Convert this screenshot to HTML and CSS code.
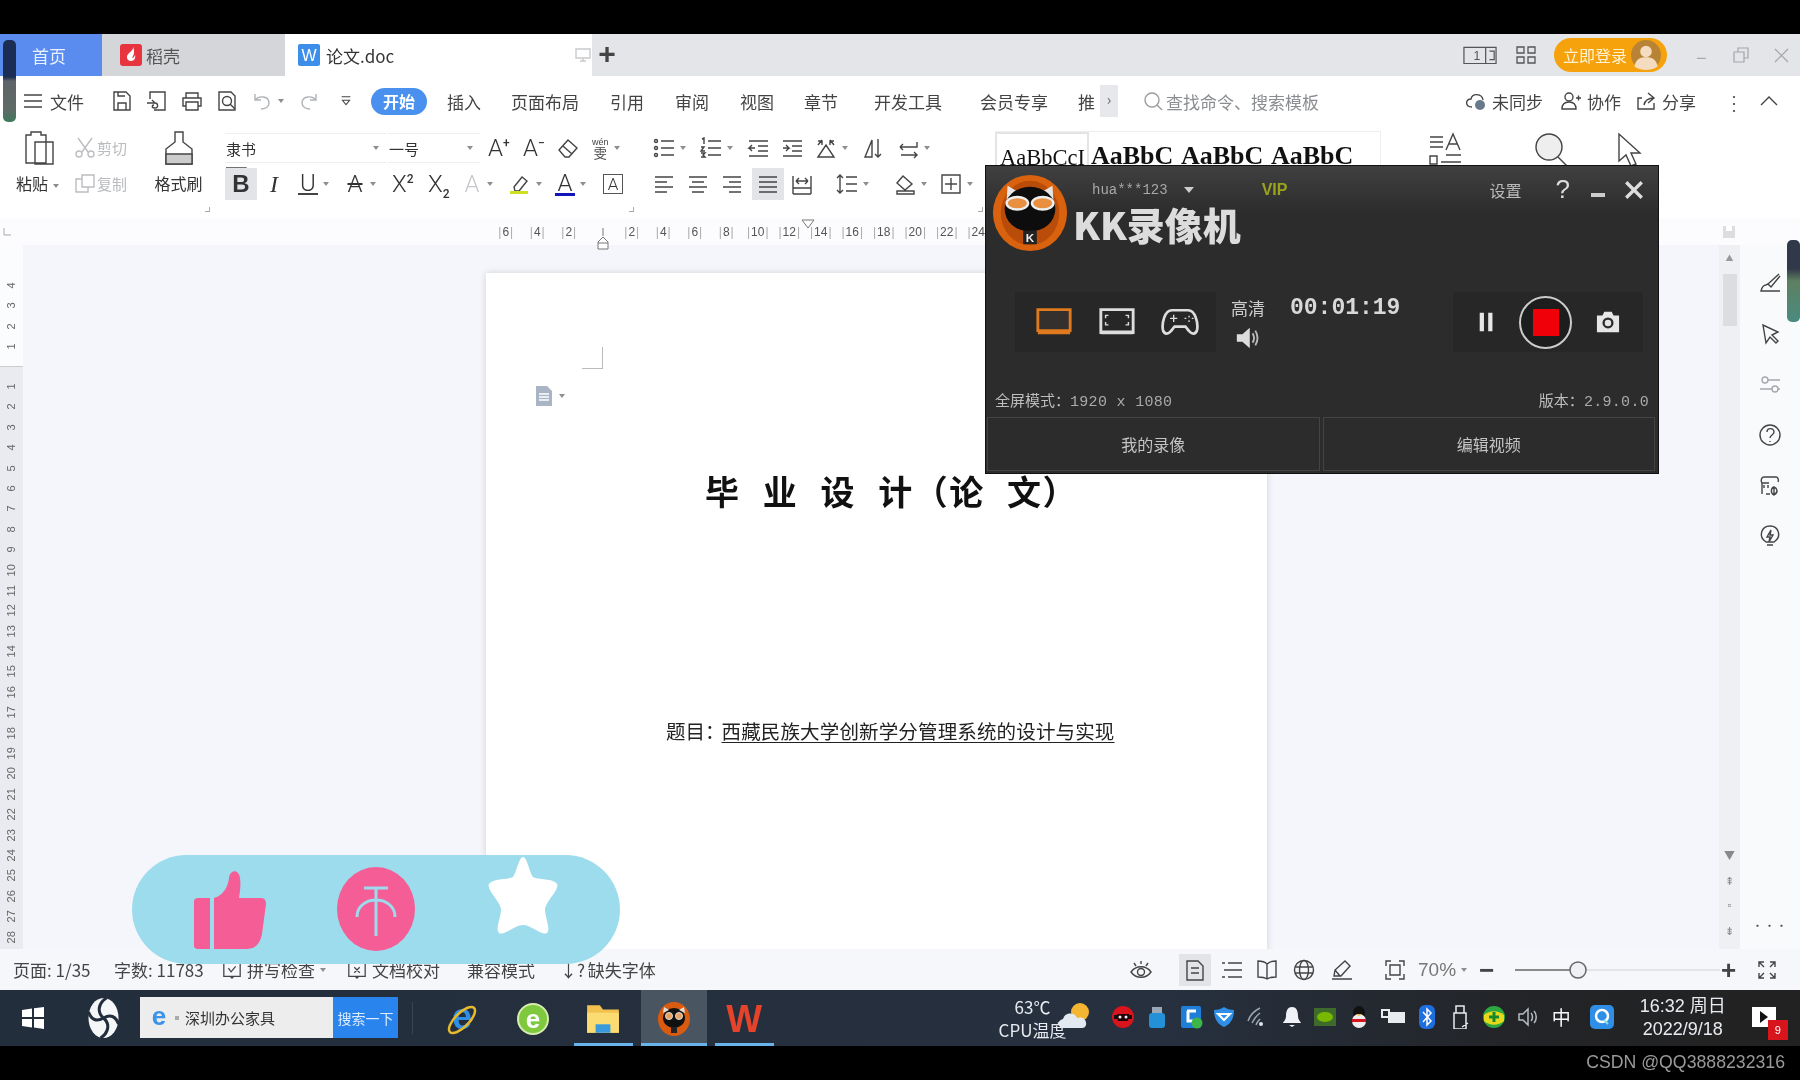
FILE: index.html
```html
<!DOCTYPE html>
<html lang="zh">
<head>
<meta charset="utf-8">
<title>论文.doc</title>
<link rel="stylesheet" href="styles.css">
</head>
<body>
<div class="screen">
  <div class="blackbar"></div>

  <div class="tabbar">
    <div class="tab home">首页</div>
    <div class="tab shell">
      <svg class="tabicon" viewBox="0 0 22 22"><rect width="22" height="22" rx="3" fill="#e8343f"/><path d="M13 3c1 4-7 6-6 11 .4 2 2 3 4 3 3 0 5-3 4-6-.5 2-2 3-3 3 2-3 3-7 1-11z" fill="#fff"/></svg>
      <span>稻壳</span>
    </div>
    <div class="tab doc">
      <svg class="tabicon" viewBox="0 0 22 22"><rect width="22" height="22" rx="2" fill="#3d8ee8"/><text x="11" y="17" text-anchor="middle" class="wlogo">W</text></svg>
      <span>论文.doc</span>
      <svg class="monitor" viewBox="0 0 18 18"><path d="M2 3h14v9H2zM9 12v3M6 15h6"/></svg>
    </div>
    <div class="plus">+</div>
    <div class="tabright">
      <svg class="tr1" viewBox="0 0 36 20"><path d="M1 2h34v17H1zM24 2v17M28 6h5v9h-5"/><text x="11" y="15" class="trnum">1</text></svg>
      <svg class="tr2" viewBox="0 0 22 20"><path d="M2 2h7v6H2zM13 2h7v6h-7zM2 12h7v6H2zM13 12h7v6h-7z"/></svg>
      <div class="login">立即登录
        <svg class="avatar" viewBox="0 0 26 26"><circle cx="13" cy="13" r="13" fill="#b98336"/><circle cx="13" cy="10" r="5" fill="#f3dcc0"/><path d="M3 23c1-7 6-8 10-8s9 1 10 8c-5 4-15 4-20 0z" fill="#f3dcc0"/></svg>
      </div>
      <span class="winbtn min">–</span>
      <svg class="winbtn-i" viewBox="0 0 18 18"><path d="M2 6h10v10H2zM6 6V2h10v10h-4"/></svg>
      <svg class="winbtn-x" viewBox="0 0 18 18"><path d="M3 3l13 13M16 3L3 16"/></svg>
    </div>
  </div>

  <div class="menubar">
    <svg class="ic" viewBox="0 0 22 22"><path d="M2 5h18M2 11h18M2 17h18"/></svg>
    <span>文件</span>
    <svg class="ic" viewBox="0 0 22 22"><path d="M3 2h12l4 4v14H3zM7 20v-7h8v7M7 2v4h7"/></svg>
    <svg class="ic" viewBox="0 0 22 22"><path d="M4 9V2h15v18H8M1 13h8l-3-3M9 13c3 0 4 5 0 5s-3-3-1-3"/></svg>
    <svg class="ic" viewBox="0 0 22 22"><path d="M5 8V3h12v5M5 16H2V8h18v8h-3M5 12h12v8H5z"/></svg>
    <svg class="ic" viewBox="0 0 22 22"><path d="M3 2h12l4 4v14H3z"/><circle cx="11" cy="11" r="4.5"/><path d="M14 14l5 5"/></svg>
    <span class="t"><svg class="ic dim" viewBox="0 0 22 22"><path d="M4 4v6h6M4 10c4-5 14-4 14 3 0 4-4 6-8 6"/></svg><i class="car"></i></span>
    <svg class="ic dim" viewBox="0 0 22 22"><path d="M18 4v6h-6M18 10c-4-5-14-4-14 3 0 4 4 6 8 6"/></svg>
    <svg class="ic small" viewBox="0 0 22 22"><path d="M5 5h12M6 10l5 6 5-6z"/></svg>
    <span class="pill">开始</span>
    <span>插入</span><span>页面布局</span><span>引用</span><span>审阅</span><span>视图</span><span>章节</span><span>开发工具</span><span>会员专享</span>
    <span>推</span><span class="more">›</span>
    <span class="search"><svg class="ic" viewBox="0 0 22 22"><circle cx="10" cy="10" r="7"/><path d="M15 15l5 5"/></svg>查找命令、搜索模板</span>
    <span class="act"><svg class="ic" viewBox="0 0 22 22"><path d="M7 17c-7 0-7-8-1-8 1-6 11-6 12 1"/><circle cx="15" cy="15" r="5" fill="#69798c" stroke="none"/></svg>未同步</span>
    <span class="act"><svg class="ic" viewBox="0 0 22 22"><circle cx="9" cy="7" r="4"/><path d="M2 19c0-5 3-7 7-7s7 2 7 7zM16 8h5M18.5 5.500v5"/></svg>协作</span>
    <span class="act"><svg class="ic" viewBox="0 0 22 22"><path d="M7 8H3v11h16v-6M13 3l6 5-6 5M19 8c-6 0-9 2-10 7"/></svg>分享</span>
    <span class="dots">⋮</span>
    <svg class="ic" viewBox="0 0 22 22"><path d="M3 15l8-8 8 8"/></svg>
  </div>

  <div class="ribbon">
    <div class="clip">
      <div class="paste">
        <svg class="big" viewBox="0 0 34 36"><path d="M5 5h5V2h10v3h5v28H5zM14 12h18v22H14z"/></svg>
        <span class="lbl">粘贴<i class="car"></i></span>
      </div>
      <div class="cutcopy">
        <span class="faded"><svg class="ic" viewBox="0 0 22 22"><path d="M4 2l10 14M18 2L8 16"/><circle cx="5" cy="18" r="3"/><circle cx="17" cy="18" r="3"/></svg>剪切</span>
        <span class="faded"><svg class="ic" viewBox="0 0 22 22"><path d="M8 3h12v12H8zM8 7H2v13h12v-5"/></svg>复制</span>
      </div>
      <div class="paste brush">
        <svg class="big" viewBox="0 0 34 36"><path d="M13 2h8v10l9 7v15H4V19l9-7z"/><path d="M4 24h26v10H4z" fill="#ccc"/></svg>
        <span class="lbl">格式刷</span>
      </div>
    </div>

    <div class="fontgrp">
      <div class="row1">
        <div class="fbox">隶书<i class="car"></i></div>
        <div class="fbox size">一号<i class="car"></i></div>
        <span class="gl">A<sup>+</sup></span>
        <span class="gl">A<sup>−</sup></span>
        <svg class="ic" viewBox="0 0 22 22"><path d="M2 13l9-10 9 8-8 9H8zM6 9l9 8"/></svg>
        <span class="t"><span class="wen"><small>wén</small>雯</span><i class="car"></i></span>
        <span class="t"><svg class="ic" viewBox="0 0 22 22"><path d="M8 4h13M8 11h13M8 18h13"/><circle cx="3" cy="4" r="1.500"/><circle cx="3" cy="11" r="1.500"/><circle cx="3" cy="18" r="1.500"/></svg><i class="car"></i></span>
        <span class="t"><svg class="ic" viewBox="0 0 22 22"><path d="M8 4h13M8 11h13M8 18h13M2 2l2-1v6M1 10h3l-3 4h4M1 16h4l-2 2 2 2H1"/></svg><i class="car"></i></span>
        <svg class="ic" viewBox="0 0 22 22"><path d="M2 4h19M11 9h10M11 14h10M2 19h19M8 11H2l3-3M2 11l3 3"/></svg>
        <svg class="ic" viewBox="0 0 22 22"><path d="M2 4h19M11 9h10M11 14h10M2 19h19M2 11h6l-3-3M8 11l-3 3"/></svg>
        <span class="t"><svg class="ic" viewBox="0 0 22 22"><path d="M3 20L11 8l8 12zM3 8l4-5M3 4h4v4M19 8l-4-5M19 4h-4v4"/></svg><i class="car"></i></span>
        <svg class="ic" viewBox="0 0 22 22"><path d="M2 20L9 3v17zM2 20h7M15 2v18M12 17l3 3 3-3"/></svg>
        <span class="t"><svg class="ic" viewBox="0 0 22 22"><path d="M20 5v5H3M3 10l3-3M3 10l3 3M4 18h16M17 15l3 3-3 3"/></svg><i class="car"></i></span>
        <svg class="ic" viewBox="0 0 22 22"><path d="M1 5h20v5M1 5v5M5 5v3M9 5v3M13 5v3M17 5v3M1 14v4h6M21 14v4h-6M11 13v5"/></svg>
      </div>
      <div class="row2">
        <span class="gl bold on">B</span>
        <span class="gl ital">I</span>
        <span class="t"><span class="gl under">U</span><i class="car"></i></span>
        <span class="t"><span class="gl strike">A</span><i class="car"></i></span>
        <span class="gl">X<sup>2</sup></span>
        <span class="gl">X<sub>2</sub></span>
        <span class="t"><span class="gl pale">A</span><i class="car"></i></span>
        <span class="t"><svg class="ic" viewBox="0 0 22 22"><path d="M5 14l8-10 5 4-8 10H6z"/><path d="M1 18h18v3H1z" fill="#cfe01e" stroke="none"/></svg><i class="car"></i></span>
        <span class="t"><span class="gl colored">A</span><i class="car"></i></span>
        <span class="gl boxed">A</span>
        <svg class="ic" viewBox="0 0 22 22"><path d="M2 4h18M2 9h12M2 14h18M2 19h12"/></svg>
        <svg class="ic" viewBox="0 0 22 22"><path d="M2 4h18M5 9h12M2 14h18M5 19h12"/></svg>
        <svg class="ic" viewBox="0 0 22 22"><path d="M2 4h18M8 9h12M2 14h18M8 19h12"/></svg>
        <svg class="ic on" viewBox="0 0 22 22"><path d="M2 4h18M2 9h18M2 14h18M2 19h18"/></svg>
        <svg class="ic" viewBox="0 0 22 22"><path d="M2 3v18M20 3v18M2 21h18M2 15h18M5 8h12M5 8l3-3M5 8l3 3M17 8l-3-3M17 8l-3 3"/></svg>
        <span class="t"><svg class="ic" viewBox="0 0 22 22"><path d="M4 2v18M1 5l3-3 3 3M1 17l3 3 3-3M10 4h11M10 11h11M10 18h11"/></svg><i class="car"></i></span>
        <span class="t"><svg class="ic" viewBox="0 0 22 22"><path d="M9 3l9 8-7 6-8-7zM3 18h17v3H3z"/></svg><i class="car"></i></span>
        <span class="t"><svg class="ic" viewBox="0 0 22 22"><path d="M2 2h18v18H2zM11 5v12M5 11h12" /></svg><i class="car"></i></span>
      </div>
    </div>

    <div class="gallery">
      <span class="sel">AaBbCcI</span><span>AaBbC</span><span>AaBbC</span><span>AaBbC</span>
    </div>
    <div class="bigtools">
      <svg class="big" viewBox="0 0 36 36"><path d="M3 5h13M3 10h13M3 15h13M19 18l7-16 7 16M22 12h8M19 23h15M3 24h7v8H3zM14 30h20"/></svg>
      <svg class="big" viewBox="0 0 36 36"><circle cx="16" cy="15" r="13" fill="#eee"/><path d="M25 25l9 9"/></svg>
      <svg class="big" viewBox="0 0 36 36"><path d="M8 2v27l7-6 5 11 5-2-5-11h9z"/></svg>
    </div>
    <i class="launch l1"></i><i class="launch l2"></i><i class="launch l3"></i>
  </div>

  <div class="ruler">
    <svg class="corner" viewBox="0 0 10 10"><path d="M1 1v7h7"/></svg>
    <div class="rnums">
      <span>6</span><span>4</span><span>2</span><span class="blank"></span><span>2</span><span>4</span><span>6</span><span>8</span><span>10</span><span>12</span><span>14</span><span>16</span><span>18</span><span>20</span><span>22</span><span>24</span>
    </div>
    <svg class="rbtn" viewBox="0 0 14 14"><path d="M1 1h12v12H1z" fill="#ddd"/><path d="M4 1h6v5H4z" fill="#fff"/></svg>
    <svg class="indent" viewBox="0 0 14 22"><path d="M7 0v8M2 14l5-5 5 5v7H2zM2 15h10"/></svg>
    <svg class="tabmark" viewBox="0 0 14 10"><path d="M1 1h12L7 9z"/></svg>
  </div>

  <div class="work">
    <div class="vruler">
      <div class="vtop"><span>4</span><span>3</span><span>2</span><span>1</span></div>
      <div class="vmain">
        <span>1</span><span>2</span><span>3</span><span>4</span><span>5</span><span>6</span><span>7</span><span>8</span><span>9</span><span>10</span><span>11</span><span>12</span><span>13</span><span>14</span><span>15</span><span>16</span><span>17</span><span>18</span><span>19</span><span>20</span><span>21</span><span>22</span><span>23</span><span>24</span><span>25</span><span>26</span><span>27</span><span>28</span>
      </div>
    </div>
    <div class="docarea">
      <div class="page">
        <div class="cropmark"></div>
        <div class="docicon">
          <svg viewBox="0 0 20 22"><path d="M2 1h11l5 5v15H2z" fill="#a9b4c4"/><path d="M5 9h10M5 12h10M5 15h10" stroke="#fff" stroke-width="1.500"/></svg><i class="car"></i>
        </div>
        <h1 class="title">毕 业 设 计（论 文）</h1>
        <p class="subject">题目：<u>西藏民族大学创新学分管理系统的设计与实现</u></p>
      </div>
    </div>
    <div class="scroll">
      <span class="sarrow">▲</span>
      <div class="thumb"></div>
      <div class="sbtm"><span>▼</span><span>⇞</span><span>▫</span><span>⇟</span></div>
    </div>
    <div class="side">
      <svg class="ic" viewBox="0 0 22 22"><path d="M20 2L9 12l-2 1c-2 0-4 2-5 6h19M9 12l3 3 9-11"/></svg>
      <svg class="ic" viewBox="0 0 22 22"><path d="M4 2l3 18 4-6 6 6 2-2-6-6 6-3z"/></svg>
      <svg class="ic light" viewBox="0 0 22 22"><circle cx="6" cy="7" r="3"/><circle cx="16" cy="16" r="3"/><path d="M9 7h12M1 16h12M19 16h2"/></svg>
      <svg class="ic" viewBox="0 0 22 22"><circle cx="11" cy="11" r="10"/><path d="M8 8c0-5 7-4 7 0 0 3-4 3-4 6M11 17v1"/></svg>
      <svg class="ic" viewBox="0 0 22 22"><path d="M3 20V9c-2-3 0-6 2-6h12c2 0 3 3 2 5M3 9h7M7 20h4M5 11v3M9 11v3"/><path d="M15 21c-4-2-3-7 0-8 3 1 5 5 0 8zM15 13v8"/></svg>
      <svg class="ic" viewBox="0 0 22 22"><path d="M8 20h6M7 17c-8-5-5-16 4-16s12 11 4 16zM12 5l-4 7h3l-1 5 4-7h-3z"/></svg>
      <span class="ellipsis">•••</span>
    </div>
  </div>

  <div class="status">
    <div class="sleft">
      <span>页面: 1/35</span>
      <span>字数: 11783</span>
      <span class="t"><svg class="ic" viewBox="0 0 22 22"><path d="M2 3h18v15H2zM7 9l3 4 5-6M9 18l2 2 2-2"/></svg>拼写检查<i class="car"></i></span>
      <span class="t"><svg class="ic" viewBox="0 0 22 22"><path d="M2 3h18v15H2zM8 8l6 6M14 8l-6 6M9 18l2 2 2-2"/></svg>文档校对</span>
      <span>兼容模式</span>
      <span class="missing">↓? 缺失字体</span>
    </div>
    <div class="sright">
      <svg class="ic" viewBox="0 0 22 22"><path d="M1 13c5-7 15-7 20 0-5 7-15 7-20 0zM11 2v3M4 4l2 3M18 4l-2 3"/><circle cx="11" cy="13" r="3.500"/></svg>
      <svg class="ic on" viewBox="0 0 22 22"><path d="M3 2h11l5 5v14H3zM7 9h8M7 14h8"/></svg>
      <svg class="ic" viewBox="0 0 22 22"><path d="M7 4h14M3 11h18M7 18h14M1 4h3M1 18h3"/></svg>
      <svg class="ic" viewBox="0 0 22 22"><path d="M11 5c-3-3-6-3-9-3v16c3 0 6 0 9 2 3-2 6-2 9-2V2c-3 0-6 0-9 3zM11 5v15"/></svg>
      <svg class="ic" viewBox="0 0 22 22"><circle cx="11" cy="11" r="9.500"/><ellipse cx="11" cy="11" rx="4.500" ry="9.500"/><path d="M2 8h18M2 14h18"/></svg>
      <svg class="ic" viewBox="0 0 22 22"><path d="M2 20h20M4 17l1-6L15 2l5 5-9 10zM5 11l5 6"/></svg>
      <svg class="ic" viewBox="0 0 22 22"><path d="M7 2H2v5M15 2h5v5M2 15v5h5M20 15v5h-5M6 6h10v10H6z"/></svg>
      <span class="zoomval">70%<i class="car"></i></span>
      <span class="minus">−</span>
      <svg class="slider" viewBox="0 0 207 20"><path class="sl-on" d="M1 10h55"/><path class="sl-off" d="M72 10h134"/><circle class="sl-k" cx="64" cy="10" r="8"/></svg>
      <span class="plusz">+</span>
      <svg class="ic" viewBox="0 0 22 22"><path d="M3 8V3h5M3 3l5 5M19 8V3h-5M19 3l-5 5M3 14v5h5M3 19l5-5M19 14v5h-5M19 19l-5-5"/></svg>
    </div>
  </div>

  <div class="taskbar">
    <div class="tcell win">
      <svg viewBox="0 0 24 24"><path d="M1 4l10-1.500V11H1zM13 2.200L23 1v10H13zM1 13h10v8.500L1 20zM13 13h10v10l-10-1.500z" fill="#fff"/></svg>
    </div>
    <div class="tcell swirl">
      <svg viewBox="0 0 30 40"><ellipse cx="15" cy="20" rx="15" ry="20" fill="#f4f6f8"/><path d="M15 20C8 14 10 5 18 0M15 20c7 6 5 15-3 20M15 20C8 24 3 22 0 14M15 20c7-4 12-2 15 6" fill="none" stroke="#232e3d" stroke-width="3"/></svg>
    </div>
    <div class="tsearch">
      <div class="tinput">
        <svg class="vis" viewBox="0 0 26 26"><text x="13" y="20" text-anchor="middle" class="ietxt">e</text></svg>
        <i class="tdot"></i>深圳办公家具
      </div>
      <div class="tgo">搜索一下</div>
    </div>
    <div class="tsep"></div>
    <div class="tapp">
      <svg class="vis" viewBox="0 0 36 36"><text x="18" y="28" text-anchor="middle" class="ie2">e</text><ellipse cx="18" cy="19" rx="17" ry="7" transform="rotate(-45 18 19)" class="iering"/></svg>
    </div>
    <div class="tapp">
      <svg class="vis" viewBox="0 0 36 36"><circle cx="18" cy="18" r="15" fill="#7ec93e"/><circle cx="18" cy="18" r="15" fill="none" stroke="#d7ecb0" stroke-width="2"/><text x="18" y="27" text-anchor="middle" class="ie3">e</text></svg>
    </div>
    <div class="tapp open">
      <svg viewBox="0 0 34 34"><path d="M2 4h12l3 4h15v22H2z" fill="#f2c14e"/><path d="M2 11h30v19H2z" fill="#fbdc72"/><path d="M10 30v-8h14v8z" fill="#3a9bdc"/></svg>
    </div>
    <div class="tapp open active">
      <svg viewBox="0 0 36 36"><ellipse cx="18" cy="18" rx="16" ry="17" fill="#d85b10"/><ellipse cx="18" cy="17" rx="11" ry="10" fill="#111"/><path d="M7 12l1-6 5 3zM29 12l-1-6-5 3z" fill="#ddd"/><circle cx="13" cy="15" r="3.500" fill="#e8a060" stroke="#ddd"/><circle cx="23" cy="15" r="3.500" fill="#e8a060" stroke="#ddd"/><rect x="15" y="26" width="6" height="6" fill="#222"/></svg>
    </div>
    <div class="tapp open"><span class="wps">W</span></div>
    <div class="temp">
      <div class="temptxt">63℃<br>CPU温度</div>
      <svg class="cloud" viewBox="0 0 34 28"><circle cx="22" cy="10" r="9" fill="#f4b632"/><path d="M6 26c-7 0-7-8-1-9 2-7 12-7 14-1 6-2 10 2 9 7-1 3-3 3-5 3z" fill="#e3e9f0"/></svg>
    </div>
    <div class="tray">
      <span><svg viewBox="0 0 24 24"><circle cx="12" cy="12" r="11" fill="#d8141c"/><path d="M3 10h18v4H3z" fill="#111"/><path d="M6 9h12l-1 7H7z" fill="#200"/><circle cx="9" cy="12" r="1.500" fill="#eee"/><circle cx="15" cy="12" r="1.500" fill="#eee"/></svg></span>
      <span><svg viewBox="0 0 24 24"><rect x="7" y="2" width="10" height="7" fill="#9aa7b4"/><rect x="4" y="8" width="16" height="15" rx="3" fill="#2390d8"/></svg></span>
      <span><svg viewBox="0 0 24 24"><rect x="2" y="1" width="20" height="22" rx="2" fill="#1e7ed8"/><path d="M8 6h9M9 6v10h5" stroke="#fff" stroke-width="3" fill="none"/><circle cx="18" cy="18" r="5.500" fill="#3cb648"/></svg></span>
      <span><svg viewBox="0 0 24 24"><path d="M12 2c3 2 6 3 10 3 0 8-3 14-10 17C5 19 2 13 2 5c4 0 7-1 10-3z" fill="#2f8fe6"/><path d="M6 9h12l-6 6z" fill="none" stroke="#fff" stroke-width="2"/></svg></span>
      <span><svg viewBox="0 0 24 24"><path d="M2 16C4 10 8 6 14 3M6 18c2-4 4-7 8-10M10 20c1-3 2-4 4-6" stroke="#9ba6b2" stroke-width="1.500" fill="none"/><circle cx="15" cy="19" r="2" fill="#dfe5ea"/></svg></span>
      <span><svg viewBox="0 0 24 24"><path d="M12 2c5 0 6 5 6 9s3 6 3 7H3c0-1 3-3 3-7s1-9 6-9zM9 20h6l-3 2z" fill="#eef2f6"/></svg></span>
      <span><svg viewBox="0 0 24 24"><rect x="1" y="3" width="22" height="18" fill="#3e6b2c"/><ellipse cx="12" cy="12" rx="8" ry="5" fill="#76b900"/></svg></span>
      <span><svg viewBox="0 0 24 24"><ellipse cx="12" cy="8" rx="6" ry="7" fill="#111"/><ellipse cx="12" cy="16" rx="7" ry="7" fill="#eee"/><path d="M5 14h14v3H5z" fill="#d8141c"/><path d="M9 9h6l-3 2z" fill="#f4b632"/></svg></span>
      <span><svg viewBox="0 0 24 24"><rect x="7" y="7" width="17" height="11" fill="#e8ecef"/><path d="M1 5h7v7H1z" fill="none" stroke="#e8ecef" stroke-width="2"/></svg></span>
      <span><svg viewBox="0 0 24 24"><rect x="4" y="0" width="16" height="24" rx="6" fill="#1d6fe0"/><path d="M8 7l8 9-4 4V4l4 4-8 9" fill="none" stroke="#fff" stroke-width="1.500"/></svg></span>
      <span><svg viewBox="0 0 24 24"><path d="M6 8h12v16H6zM8 1h8v7H8zM14 22l6-4" fill="none" stroke="#e8ecef" stroke-width="1.500"/></svg></span>
      <span><svg viewBox="0 0 24 24"><circle cx="12" cy="12" r="11" fill="#2ea843"/><path d="M2 10c6-5 14-5 20 0v6c-6 5-14 5-20 0z" fill="#e6d91c"/><path d="M12 7v10M7 12h10" stroke="#158a2d" stroke-width="3"/></svg></span>
      <span><svg viewBox="0 0 24 24"><path d="M3 9h4l5-5v16l-5-5H3zM15 8c2 2 2 6 0 8M18 6c3 3 3 9 0 12" fill="none" stroke="#b4bcc4" stroke-width="1.500"/></svg></span>
      <span class="ime">中</span>
      <span class="qq"><svg viewBox="0 0 24 24"><rect width="24" height="24" rx="5" fill="#2f8fe6"/><circle cx="12" cy="11" r="6" fill="none" stroke="#fff" stroke-width="2.500"/><path d="M14 15l4 4" stroke="#8ee0e8" stroke-width="2"/></svg></span>
    </div>
    <div class="clock">16:32 周日<br>2022/9/18</div>
    <div class="notify">
      <svg viewBox="0 0 24 20"><rect width="24" height="20" fill="#fff"/><path d="M8 4l8 6-8 6z" fill="#111"/></svg>
      <span class="badge">9</span>
    </div>
  </div>

  <div class="footer">CSDN @QQ3888232316</div>

  <div class="meter meter-l"></div>
  <div class="meter meter-r"></div>

  <div class="kk">
    <svg class="kklogo" viewBox="0 0 80 80">
      <ellipse cx="40" cy="40" rx="38" ry="39" fill="#d9620f"/>
      <ellipse cx="40" cy="40" rx="30" ry="33" fill="#b84c08"/>
      <path d="M16 26l1-14 12 7zM64 26l-1-14-12 7z" fill="#e6e6e6"/>
      <ellipse cx="40" cy="36" rx="26" ry="23" fill="#0d0d0d"/>
      <ellipse cx="27" cy="30" rx="11" ry="6.500" fill="#e89040" stroke="#eee" stroke-width="2.500"/>
      <ellipse cx="53" cy="30" rx="11" ry="6.500" fill="#e89040" stroke="#eee" stroke-width="2.500"/>
      <rect x="33" y="58" width="14" height="14" fill="#222"/>
      <text x="40" y="70" text-anchor="middle" class="kkk">K</text>
    </svg>
    <div class="kktop">
      <span class="kkuser">hua***123</span><i class="kkcar"></i>
      <span class="kkvip">VIP</span>
      <span class="kkset">设置</span>
      <span class="kkq">?</span>
      <span class="kkmin"></span>
      <svg class="kkx" viewBox="0 0 18 18"><path d="M2 2l14 14M16 2L2 16"/></svg>
    </div>
    <div class="kktitle">KK录像机</div>
    <div class="kkctl">
      <div class="kkmodes">
        <svg viewBox="0 0 40 34"><path d="M3 4h34v22H3z" class="kko"/><path d="M3 26h34v4H3z" fill="#e07a1f"/></svg>
        <svg viewBox="0 0 40 34"><path d="M3 4h34v24H3z" class="kkw"/><path d="M3 26h34v4H3z" fill="#ddd"/><path d="M11 10H8v3M29 10h3v3M11 20H8v-3M29 20h3v-3" class="kkw2"/></svg>
        <svg viewBox="0 0 42 34"><path d="M12 4h18c8 0 11 14 10 21-1 6-6 6-9 2l-4-5H15l-4 5c-3 4-8 4-9-2C1 18 4 4 12 4z" class="kkw"/><path d="M10 13h8M14 9v8M26 13h2M31 10v2M31 15v2M34 13h2" class="kkw2"/></svg>
      </div>
      <div class="kkmid">
        <div class="kkline"><span class="kkhd">高清</span><span class="kktime">00:01:19</span></div>
        <svg class="kkvol" viewBox="0 0 26 26"><path d="M2 9h6l8-7v22l-8-7H2z" fill="#ddd"/><path d="M19 8c2 3 2 7 0 10M22 5c3 5 3 11 0 16" fill="none" stroke="#bbb" stroke-width="2"/></svg>
      </div>
      <div class="kkrec">
        <svg class="kkpause" viewBox="0 0 20 24"><path d="M2 1h5v22H2zM12 1h5v22h-5z" fill="#e6e6e6"/></svg>
        <div class="kkbtn"><i></i></div>
        <svg class="kkcam" viewBox="0 0 28 26"><path d="M2 6h6l2-4h8l2 4h6v18H2z" fill="#e6e6e6"/><circle cx="14" cy="14" r="6" fill="#2b2b2b"/><circle cx="14" cy="14" r="3.500" fill="#e6e6e6"/></svg>
      </div>
    </div>
    <div class="kkinfo"><span>全屏模式：<b>1920 x 1080</b></span><span>版本：<b>2.9.0.0</b></span></div>
    <div class="kkbtns"><div>我的录像</div><div>编辑视频</div></div>
  </div>

  <div class="sticker">
    <svg class="thumbup" viewBox="0 0 72 78"><path d="M0 30c0-2 2-3 4-3h12v51H4c-2 0-4-1-4-3zM20 27c8-2 14-10 15-20 1-9 10-9 11 0 1 7 0 13-1 20h22c4 0 5 3 5 6l-4 30c-2 10-7 15-15 15H20z" fill="#f45d96"/></svg>
    <div class="coin">
      <svg viewBox="0 0 52 56"><path d="M14 7h24M26 7v48M7 36c0-10 8-17 19-17s19 7 19 17" fill="none" stroke="#9ddcec" stroke-width="3"/></svg>
    </div>
    <svg class="star" viewBox="0 0 72 78"><path d="M36 0c4 0 6 14 10 20 5 3 20 1 24 7 3 5-11 17-12 25 0 9 6 20 2 24-5 3-16-8-24-8-8 0-19 11-24 8-4-4 2-15 2-24C13 44-1 32 2 27c4-6 19-4 24-7C30 14 32 0 36 0z" fill="#fff"/></svg>
  </div>
</div>
</body>
</html>
```

FILE: styles.css
```css
* { box-sizing: border-box; }
html, body { margin: 0; padding: 0; background: #000; }
body { font-family: "Noto Sans CJK SC", "Noto Sans", sans-serif; color: #444; }
i { font-style: normal; }

.screen {
  position: relative;
  width: 1800px;
  height: 1080px;
  overflow: hidden;
  background: #000;
  display: flex;
  flex-direction: column;
  filter: blur(0.5px);
}
.blackbar { height: 34px; flex: none; background: #000; }

svg { flex: none; display: block; }
svg.vis { overflow: visible; }
.ic { width: 22px; height: 22px; fill: none; stroke: #444; stroke-width: 1.4; }
.ic.dim { stroke: #b0b3b8; }
.ic.small { width: 16px; height: 16px; margin-left: 3px; }
.ic.light { stroke: #a5a8ad; }
.big { width: 36px; height: 36px; fill: none; stroke: #444; stroke-width: 1.4; }
.car { display: inline-block; width: 0; height: 0; margin-left: 5px; border: 3px solid transparent; border-top: 4px solid #8b8e93; border-bottom: 0; vertical-align: middle; }
.t { display: inline-flex; align-items: center; white-space: nowrap; }
.on { background: #e2e4e8; box-shadow: 0 0 0 5px #e2e4e8; }

/* tab strip */
.tabbar { height: 42px; flex: none; display: flex; align-items: stretch; background: #e3e5e8; font-size: 17px; }
.tab { display: flex; align-items: center; }
.home { width: 102px; padding-left: 32px; background: #5a8cf0; color: #e9f0ff; }
.shell { width: 183px; padding-left: 18px; background: #d5d6d9; color: #555; gap: 4px; }
.doc { width: 307px; padding-left: 13px; background: #fff; color: #333; gap: 6px; position: relative; }
.tabicon { width: 22px; height: 22px; }
.wlogo { font: 16px "Liberation Sans", sans-serif; fill: #fff; }
.monitor { width: 18px; height: 18px; margin-left: auto; margin-right: 0; fill: none; stroke: #c8cacd; stroke-width: 1.4; }
.plus { width: 30px; text-align: center; font: 700 30px/40px "Liberation Sans", sans-serif; color: #444; }
.tabright { margin-left: auto; display: flex; align-items: center; }
.tr1 { width: 34px; height: 20px; margin-right: 18px; fill: none; stroke: #555; stroke-width: 1.3; }
.trnum { font: 13px "Liberation Sans", sans-serif; fill: #555; stroke: none; }
.tr2 { width: 22px; height: 20px; margin-right: 17px; fill: none; stroke: #555; stroke-width: 1.3; }
.login { width: 113px; height: 34px; border-radius: 17px; background: #f5a20c; color: #fff3d6; display: flex; align-items: center; padding-left: 9px; gap: 3px; font-size: 16px; white-space: nowrap; }
.avatar { width: 30px; height: 30px; margin-left: 1px; }
.winbtn { width: 16px; margin-left: 29px; color: #aaa; font-size: 20px; }
.winbtn-i, .winbtn-x { width: 18px; height: 18px; fill: none; stroke: #a2a5a9; stroke-width: 1.2; }
.winbtn-i { margin-left: 20px; }
.winbtn-x { margin: 0 10px 0 22px; }

/* menu */
.menubar {
  height: 52px; flex: none; background: #fff; padding-left: 22px; padding-bottom: 2px;
  display: grid; align-items: center; white-space: nowrap; font-size: 17px; color: #444;
  grid-template-columns: 28px 61px 35px 35px 35px 35px 47px 37px 36px 76px 64px 99px 65px 65px 64px 70px 106px 98px 22px 42px 323px 95px 75px 87px 36px 22px;
}
.pill { width: 56px; height: 27px; border-radius: 14px; background: #4a90ee; color: #fff; font-weight: 700; font-size: 16px; line-height: 26px; text-align: center; }
.more { width: 18px; height: 32px; background: #e7e8eb; text-align: center; line-height: 28px; color: #666; font-size: 15px; }
.search { display: flex; align-items: center; gap: 2px; color: #8a8d91; }
.search .ic { stroke: #9a9da1; }
.act { display: flex; align-items: center; gap: 5px; }
.dots { font-size: 20px; color: #666; padding-left: 2px; }

/* ribbon */
.ribbon { position: relative; height: 90px; flex: none; background: #fff; display: flex; padding-top: 2px; }
.clip { width: 225px; flex: none; display: flex; }
.paste { width: 72px; display: flex; flex-direction: column; align-items: center; padding-left: 3px; gap: 2px; }
.lbl { font-size: 16px; color: #333; white-space: nowrap; height: 30px; line-height: 30px; }
.cutcopy { width: 70px; display: flex; flex-direction: column; gap: 14px; padding-top: 6px; padding-left: 2px; }
.faded { display: flex; align-items: center; gap: 1px; color: #b9bbbe; font-size: 15px; white-space: nowrap; height: 22px; }
.faded .ic { stroke: #bbbdc0; }
.brush { width: 70px; }
.fontgrp { width: 770px; flex: none; display: flex; flex-direction: column; }
.row1, .row2 { display: grid; height: 36px; align-items: center; white-space: nowrap; }
.row1 { grid-template-columns: 161px 102px 35px 34px 35px 61px 47px 47px 34px 34px 48px 34px 47px; padding-top: 3px; }
.row2 { grid-template-columns: 39px 34px 47px 47px 36px 34px 47px 46px 48px 50px 34px 34px 36px 34px 45px 58px 46px 34px; }
.fbox { height: 30px; display: flex; align-items: center; padding-left: 1px; border-top: 1px solid #eee; border-bottom: 1px solid #eee; font-size: 15px; color: #333; }
.fbox .car { margin-left: auto; margin-right: 7px; }
.fbox.size { width: 92px; margin-left: 2px; }
.gl { font: 300 24px/22px Roboto, sans-serif; color: #333; display: inline-block; width: 26px; white-space: nowrap; }
.gl sup, .gl sub { font-size: 12px; font-weight: 500; line-height: 0; }
.gl.bold { font-weight: 700; text-align: center; width: 32px; height: 32px; line-height: 32px; box-shadow: none; font-family: "Liberation Sans", sans-serif; }
.row2 .gl.on { background: #e2e4e8; }
.gl.ital { font-family: "Liberation Serif", serif; font-style: italic; padding-left: 6px; }
.gl.under { width: 20px; border-bottom: 2px solid #444; line-height: 20px; text-align: center; }
.gl.strike { width: 20px; text-align: center; text-decoration: line-through; }
.gl.pale { width: 20px; color: #c5c7ca; text-align: center; }
.gl.colored { width: 20px; text-align: center; border-bottom: 3px solid #1216b8; line-height: 20px; }
.gl.boxed { width: 20px; height: 20px; font-size: 17px; line-height: 18px; text-align: center; border: 1.5px solid #555; }
.wen { display: inline-flex; flex-direction: column; align-items: center; font-size: 13px; line-height: 12px; color: #444; }
.wen small { font-size: 9px; line-height: 9px; font-family: "Liberation Sans", sans-serif; }

.gallery {
  width: 386px; height: 70px; flex: none; margin-top: 1px; border-top: 1px solid #eee; border-right: 1px solid #eee;
  display: flex; font: 700 26px/48px "Liberation Serif", serif; color: #111; overflow: hidden; white-space: nowrap;
}
.gallery span { width: 90px; overflow: hidden; flex: none; padding-left: 2px; }
.gallery .sel { font-weight: 400; font-size: 22.5px; border: 2px solid #e4e4e4; border-bottom: 0; width: 94px; padding-left: 3px; }
.bigtools { display: grid; grid-template-columns: 106px 78px 40px; padding-left: 46px; padding-top: 2px; }
.launch { position: absolute; top: 79px; width: 5px; height: 5px; border-right: 1px solid #aaa; border-bottom: 1px solid #aaa; }
.l1 { left: 205px; } .l2 { left: 629px; } .l3 { left: 978px; }

/* ruler */
.ruler { position: relative; height: 27px; flex: none; background: #fcfcfe; display: flex; align-items: center; font: 12px/14px "Liberation Sans", sans-serif; color: #555; }
.corner { position: absolute; left: 3px; top: 9px; width: 10px; height: 10px; fill: none; stroke: #aaa; stroke-width: 1; }
.rnums { margin-left: 490px; display: flex; }
.rnums span { width: 31.5px; text-align: center; position: relative; white-space: nowrap; }
.rnums span:not(.blank)::before { content: "|"; color: #aaa; margin-right: 1px; }
.rnums span:not(.blank)::after { content: "|"; color: #aaa; margin-left: 1px; }
.rbtn { width: 14px; height: 14px; margin-left: auto; margin-right: 64px; }
.indent { position: absolute; left: 596px; top: 10px; width: 14px; height: 22px; fill: #fff; stroke: #777; stroke-width: 1; }
.tabmark { position: absolute; left: 801px; top: 1px; width: 14px; height: 10px; fill: #fff; stroke: #777; stroke-width: 1; }

/* workspace */
.work { height: 704px; flex: none; display: flex; overflow: hidden; background: #f4f6fb; }
.vruler { width: 23px; flex: none; display: flex; flex-direction: column; font: 11px/20.4px "Liberation Sans", sans-serif; color: #666; text-align: center; }
.vruler span { display: block; height: 20.4px; writing-mode: vertical-rl; transform: rotate(180deg); width: 23px; text-align: center; line-height: 23px; }
.vtop { height: 122px; flex: none; padding-top: 30px; background: #fbfcfe; border-bottom: 1px solid #ccc; }
.vmain { flex: 1; padding-top: 9px; background: #e9ebf1; }
.docarea { flex: 1; min-width: 0; }
.page { margin: 28px 0 0 463px; width: 781px; height: 700px; background: #fff; box-shadow: 0 0 7px rgba(0, 0, 0, .14); overflow: hidden; }
.cropmark { width: 21px; height: 22px; margin: 74px 0 0 96px; border-right: 1px solid #bbb; border-bottom: 1px solid #bbb; }
.docicon { margin: 16px 0 0 48px; display: flex; align-items: center; height: 22px; }
.docicon svg { width: 20px; height: 22px; }
.title { margin: 62px 0 0; padding-left: 30px; height: 44px; text-align: center; font-size: 34px; line-height: 44px; font-weight: 700; color: #111; word-spacing: 13px; letter-spacing: 1.5px; white-space: nowrap; }
.subject { margin: 204px 0 0 180px; font-size: 19.5px; line-height: 28px; color: #222; white-space: nowrap; }
.subject u { text-underline-offset: 3px; margin-left: -3px; letter-spacing: .15px; }
.scroll { width: 21px; flex: none; background: #eff0f4; display: flex; flex-direction: column; align-items: center; padding-top: 6px; }
.sarrow { font-size: 8px; color: #999; line-height: 14px; }
.thumb { width: 14px; height: 52px; margin-top: 9px; background: #dcdde0; }
.sbtm { margin-top: auto; margin-bottom: 8px; display: flex; flex-direction: column; gap: 3px; font-size: 11px; line-height: 22px; color: #888; text-align: center; }
.side { width: 60px; flex: none; display: flex; flex-direction: column; align-items: center; gap: 28.5px; padding: 27px 0 14px; background: #f9fafc; }
.ellipsis { margin-top: auto; font-size: 11px; letter-spacing: 1px; color: #555; line-height: 20px; }

/* status */
.status { height: 41px; flex: none; display: flex; align-items: center; background: #f5f7fa; font-size: 17px; color: #444; white-space: nowrap; }
.sleft { display: grid; grid-template-columns: 101px 108px 125px 120px 95px 100px; padding-left: 13px; align-items: center; }
.sleft .t .ic { width: 20px; height: 20px; margin-right: 5px; }
.missing { word-spacing: -1px; margin-left: -2px; }
.sright { margin-left: auto; display: grid; grid-template-columns: 54px 37px 35px 37px 37px 54px 34px 61px 35px 207px 35px 44px; align-items: center; }
.zoomval { font-size: 19px; color: #777; font-family: "Liberation Sans", sans-serif; }
.minus, .plusz { font: 700 26px/26px "Liberation Sans", sans-serif; color: #444; }
.slider { width: 207px; height: 20px; }
.sl-on { stroke: #666; stroke-width: 1.500; fill: none; }
.sl-off { stroke: #dcdee2; stroke-width: 1.500; fill: none; }
.sl-k { fill: #eef0f3; stroke: #666; stroke-width: 1.500; }

/* taskbar */
.taskbar { height: 56px; flex: none; display: flex; align-items: stretch; background: linear-gradient(90deg, #232e3d 0, #26303e 65%, #232427 85%, #222 100%); color: #e8ecf1; }
.tcell { display: flex; align-items: center; justify-content: center; }
.win { width: 66px; }
.win svg { width: 24px; height: 24px; }
.swirl { width: 74px; }
.swirl svg { width: 31px; height: 40px; }
.tsearch { width: 258px; height: 41px; margin-top: 7px; display: flex; font-size: 15px; }
.tinput { flex: 1; background: #ededee; color: #333; display: flex; align-items: center; padding-left: 6px; gap: 3px; white-space: nowrap; }
.tinput svg { width: 26px; height: 26px; }
.ietxt { font: 700 26px "Liberation Sans", sans-serif; fill: #3c93e8; }
.tdot { width: 4px; height: 4px; background: #aaa; margin-right: 3px; }
.tgo { width: 65px; background: #2a84ee; color: #dcecff; display: flex; align-items: center; justify-content: center; font-size: 14px; white-space: nowrap; }
.tsep { width: 1px; margin: 12px 14px 12px 14px; background: #3a4452; flex: none; }
.tapp { width: 70.5px; display: flex; align-items: center; justify-content: center; flex: none; padding-top: 2px; position: relative; }
.tapp svg { width: 36px; height: 36px; }
.tapp.open::after { content: ""; position: absolute; left: 6px; right: 6px; bottom: 0; height: 3px; background: #68b4ea; }
.tapp.active { background: #4a5562; margin: 0 2px; width: 66.5px; }
.tapp.active::after { left: 0; right: 0; }
.ie2 { font: 700 36px "Liberation Sans", sans-serif; fill: #2f8fe6; }
.iering { fill: none; stroke: #e8b92c; stroke-width: 2.5; }
.ie3 { font: 700 26px "Liberation Sans", sans-serif; fill: #fff; }
.wps { font: 900 38px/40px "Liberation Sans", sans-serif; color: #e5432a; }
.temp { position: relative; width: 112px; margin-left: 215px; flex: none; }
.temptxt { width: 76px; padding-top: 5px; text-align: center; font-size: 17px; line-height: 23px; white-space: nowrap; }
.cloud { position: absolute; left: 63px; top: 12px; width: 34px; height: 28px; }
.tray { display: flex; align-items: center; flex: none; padding-bottom: 3px; }
.tray span { width: 33.7px; display: flex; justify-content: center; align-items: center; }
.tray svg { width: 24px; height: 24px; }
.tray .ime { font-size: 19px; color: #f4f6f8; }
.tray .qq { margin-left: 7px; }
.clock { width: 110px; margin-left: 9px; flex: none; padding-top: 5px; text-align: center; font: 18px/23px "Liberation Sans", "Noto Sans CJK SC", sans-serif; white-space: nowrap; }
.notify { position: relative; width: 53px; flex: none; display: flex; align-items: center; justify-content: center; padding-bottom: 3px; }
.notify svg { width: 24px; height: 20px; }
.badge { position: absolute; left: 30px; top: 30px; width: 20px; height: 20px; background: #d8141c; color: #fff; font: 11px/20px "Liberation Sans", sans-serif; text-align: center; }

/* footer */
.footer { flex: 1; padding-right: 15px; text-align: right; font: 17.7px/33px "Liberation Sans", sans-serif; color: #9a9a9a; }

/* overlays */
.meter { position: absolute; width: 13px; height: 82px; border-radius: 5px; }
.meter-l { left: 3px; top: 40px; background: linear-gradient(#1b2c55 0, #1b2c55 45%, #5f6468 50%, #5f6a66 85%, #3f7a5c 100%); }
.meter-r { left: 1787px; top: 240px; background: linear-gradient(#30384a 0, #30384a 35%, #5e7f60 50%, #4a8b80 100%); }

.kk { position: absolute; left: 985px; top: 165px; width: 674px; height: 309px; background: #2c2c2c; border: 1px solid #111; color: #ddd; display: flex; flex-direction: column; }
.kklogo { position: absolute; left: 5px; top: 8px; width: 78px; height: 78px; }
.kkk { font: 700 12px "Liberation Sans", sans-serif; fill: #eee; }
.kktop { height: 47px; flex: none; display: flex; align-items: center; padding-left: 106px; background: linear-gradient(#404040, #2c2c2c); }
.kkuser { font: 14px "Liberation Mono", monospace; color: #a8a8a8; }
.kkcar { width: 0; height: 0; margin-left: 16px; border: 5px solid transparent; border-top: 6px solid #ccc; border-bottom: 0; }
.kkvip { margin-left: 68px; font: 700 16px "Liberation Sans", sans-serif; color: #9aa31b; }
.kkset { margin-left: 202px; font-size: 16px; color: #bbb; }
.kkq { margin-left: 34px; font: 26px "Liberation Sans", sans-serif; color: #ddd; }
.kkmin { width: 14px; height: 4px; margin: 10px 0 0 21px; background: #ccc; }
.kkx { width: 20px; height: 20px; margin-left: 19px; fill: none; stroke: #ddd; stroke-width: 3; }
.kktitle { height: 30px; flex: none; padding-left: 87px; font-size: 38px; font-weight: 900; line-height: 22px; color: #dcdcdc; white-space: nowrap; }
.kkctl { margin-top: 49px; height: 60px; flex: none; display: flex; padding-left: 29px; }
.kkmodes { width: 201px; flex: none; display: flex; align-items: center; background: #272727; padding-left: 20px; gap: 25px; }
.kkmodes svg { width: 38px; height: 34px; }
.kko { fill: #33302d; stroke: #e07a1f; stroke-width: 3; }
.kkw { fill: none; stroke: #ddd; stroke-width: 3; }
.kkw2 { fill: none; stroke: #ddd; stroke-width: 1.500; }
.kkmid { width: 237px; flex: none; padding-left: 15px; }
.kkline { display: flex; align-items: center; height: 30px; padding-top: 1px; }
.kkhd { font-size: 17px; color: #ccc; }
.kktime { margin-left: 25px; font: 700 23px "Liberation Mono", monospace; color: #d8d8d8; }
.kkvol { width: 24px; height: 24px; margin: 4px 0 0 4px; }
.kkrec { width: 190px; flex: none; display: flex; align-items: center; background: #272727; }
.kkpause { width: 17px; height: 22px; margin-left: 25px; }
.kkbtn { width: 53px; height: 53px; margin-left: 24px; border: 2px solid #ccc; border-radius: 50%; display: flex; align-items: center; justify-content: center; background: #1d1d1d; }
.kkbtn i { width: 26px; height: 27px; background: #f00008; }
.kkcam { width: 26px; height: 24px; margin-left: 23px; }
.kkinfo { margin-top: 34px; height: 28px; flex: none; display: flex; justify-content: space-between; align-items: center; padding: 0 9px 0 9px; font-size: 15px; color: #bdbdbd; white-space: nowrap; }
.kkinfo b { font: 400 15px "Liberation Mono", monospace; color: #aaa; letter-spacing: .3px; }
.kkbtns { flex: 1; display: flex; gap: 3px; margin-top: 3px; padding: 0 3px 2px 1px; }
.kkbtns div { flex: 1; border: 1px solid #444; display: flex; align-items: center; justify-content: center; font-size: 16px; color: #c4c4c4; background: #2c2c2c; }

.sticker { position: absolute; left: 132px; top: 855px; width: 488px; height: 109px; border-radius: 55px; background: #9ddcec; }
.thumbup { position: absolute; left: 62px; top: 16px; width: 72px; height: 78px; }
.coin { position: absolute; left: 205px; top: 12px; width: 78px; height: 84px; border-radius: 50%; background: #f45d96; display: flex; align-items: center; justify-content: center; }
.coin svg { width: 52px; height: 56px; }
.star { position: absolute; left: 355px; top: 2px; width: 72px; height: 78px; }
```
